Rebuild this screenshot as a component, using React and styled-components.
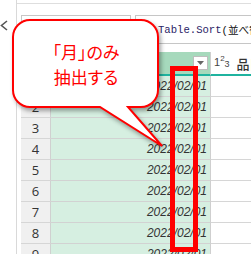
import React from "react";
import styled, { createGlobalStyle } from "styled-components";

const Global = createGlobalStyle`
  html, body { margin: 0; padding: 0; background: #fff; }
  body { width: 251px; height: 254px; overflow: hidden; font-family: "Liberation Sans", "Noto Sans CJK JP", sans-serif; }
  * { box-sizing: border-box; }
`;

const Page = styled.div`
  position: relative;
  width: 251px;
  height: 254px;
  display: flex;
  overflow: hidden;
  background: #fff;
`;

const Rail = styled.div`
  width: 17px;
  flex: none;
  border-right: 1px solid #d9d9d9;
  padding-top: 18px;
`;

const Main = styled.div`
  flex: 1;
  min-width: 0;
  display: flex;
  flex-direction: column;
  overflow: hidden;
`;

const TopStrip = styled.div`
  height: 4px;
  border-bottom: 1px solid #dedede;
  flex: none;
`;

const FormulaRow = styled.div`
  display: flex;
  gap: 4px;
  padding: 11px 0 0 4px;
  height: 44px;
  flex: none;
`;

const NameBox = styled.div`
  width: 110px;
  height: 29px;
  border: 1px solid #c6c6c6;
  flex: none;
`;

const FormulaBox = styled.div`
  width: 200px;
  height: 29px;
  flex: none;
  border: 1px solid #c6c6c6;
  display: flex;
  align-items: center;
  padding-left: 22px;
  font-family: "Liberation Mono", "Noto Sans CJK JP", monospace;
  font-size: 10.6px;
  white-space: nowrap;
  color: #111;
`;

const Fn = styled.span`
  color: #2a2466;
`;

const Grid = styled.div`
  margin-top: 4px;
  margin-left: 4px;
  display: grid;
  grid-template-columns: 30px 160px 60px;
`;

const HeadCell = styled.div`
  height: 24px;
  border-bottom: 2px solid ${(p) => (p.$teal ? "#1fb39f" : "#d4d4d4")};
  background: ${(p) => p.$bg};
  border-right: 1px solid ${(p) => (p.$sep ? "#cfcfcf" : "transparent")};
  display: flex;
  align-items: center;
  justify-content: ${(p) => p.$justify || "flex-start"};
  padding: 0 2px 0 2px;
`;

const Drop = styled.div`
  width: 15px;
  height: 14px;
  background: #fff;
  border: 1px solid #bdbdbd;
  display: flex;
  align-items: center;
  justify-content: center;
`;

const TypeIcon = styled.span`
  font-family: "Liberation Sans", sans-serif;
  font-size: 11px;
  color: #444;
  margin-left: 1px;
  display: inline-flex;
  align-items: flex-start;
  line-height: 1;
  sup { font-size: 8px; margin-top: -2px; }
  sub { font-size: 9px; margin-top: 3px; }
`;

const ColName = styled.span`
  font-family: "Noto Sans CJK JP", sans-serif;
  font-size: 13px;
  font-weight: 500;
  color: #333;
  margin-left: 7px;
  white-space: nowrap;
`;

const NumCell = styled.div`
  height: 21px;
  background: #f0f0f0;
  border-bottom: 1px solid #d6d6d6;
  border-right: 1px solid #d0d0d0;
  display: flex;
  align-items: center;
  justify-content: center;
  font-family: "Open Sans", sans-serif;
  font-size: 13px;
  color: #333;
`;

const DateCell = styled.div`
  height: 21px;
  background: #d6efe1;
  border-bottom: 1px solid #d2d2d2;
  border-right: 1px solid #cfcfcf;
  display: flex;
  align-items: center;
  justify-content: flex-end;
  padding-right: 3px;
  font-style: italic;
  font-size: 12px;
  color: #333;
`;

const BlankCell = styled.div`
  height: 21px;
  background: #fff;
  border-bottom: 1px solid #d6d6d6;
`;

const Callout = styled.div`
  position: absolute;
  left: 0;
  top: 0;
  width: 180px;
  height: 160px;
  pointer-events: none;
`;

const CalloutShape = styled.svg`
  position: absolute;
  left: 0;
  top: 0;
  filter: drop-shadow(2px 3px 2px rgba(0, 0, 0, 0.35));
`;

const CalloutText = styled.div`
  position: absolute;
  left: 13px;
  top: 39px;
  width: 146px;
  text-align: center;
  font-family: "Noto Sans CJK JP", sans-serif;
  font-feature-settings: "palt";
  font-size: 17px;
  line-height: 25px;
  color: #ff0000;
`;

const Highlight = styled.div`
  position: absolute;
  left: 170px;
  top: 66px;
  width: 28px;
  height: 186px;
  border: 5px solid #ff0000;
`;

const rows = [1, 2, 3, 4, 5, 6, 7, 8, 9];

export default function App() {
  return (
    <>
      <Global />
      <Page>
        <Rail>
          <svg width="10" height="12" viewBox="0 0 10 12">
            <polyline points="7,1 1.5,5.5 7,10" fill="none" stroke="#555" strokeWidth="1.6" />
          </svg>
        </Rail>
        <Main>
          <TopStrip />
          <FormulaRow>
            <NameBox />
            <FormulaBox>
              <Fn>Table.Sort</Fn>(並べ替えられた行
            </FormulaBox>
          </FormulaRow>
          <Grid>
            <HeadCell $bg="#f0f0f0" $sep />
            <HeadCell $bg="#a6d9bc" $teal $sep $justify="flex-end">
              <Drop>
                <svg width="7" height="4" viewBox="0 0 7 4">
                  <polygon points="0,0 7,0 3.5,4" fill="#666" />
                </svg>
              </Drop>
            </HeadCell>
            <HeadCell $bg="#fff" $teal>
              <TypeIcon>
                1<sup>2</sup>
                <sub>3</sub>
              </TypeIcon>
              <ColName>品目</ColName>
            </HeadCell>
            {rows.map((r) => (
              <React.Fragment key={r}>
                <NumCell>{r}</NumCell>
                <DateCell>2022/02/01</DateCell>
                <BlankCell />
              </React.Fragment>
            ))}
          </Grid>
        </Main>
        <Highlight />
        <Callout>
          <CalloutShape width="180" height="160" viewBox="0 0 180 160">
            <path
              d="M 30 20 H 141 A 17 17 0 0 1 158 37 V 90 A 17 17 0 0 1 141 107 H 128 L 162 146 L 100 107 H 30 A 17 17 0 0 1 13 90 V 37 A 17 17 0 0 1 30 20 Z"
              fill="#fff"
              stroke="#ff0000"
              strokeWidth="2"
            />
          </CalloutShape>
          <CalloutText>
            「月」のみ
            <br />
            抽出する
          </CalloutText>
        </Callout>
      </Page>
    </>
  );
}
